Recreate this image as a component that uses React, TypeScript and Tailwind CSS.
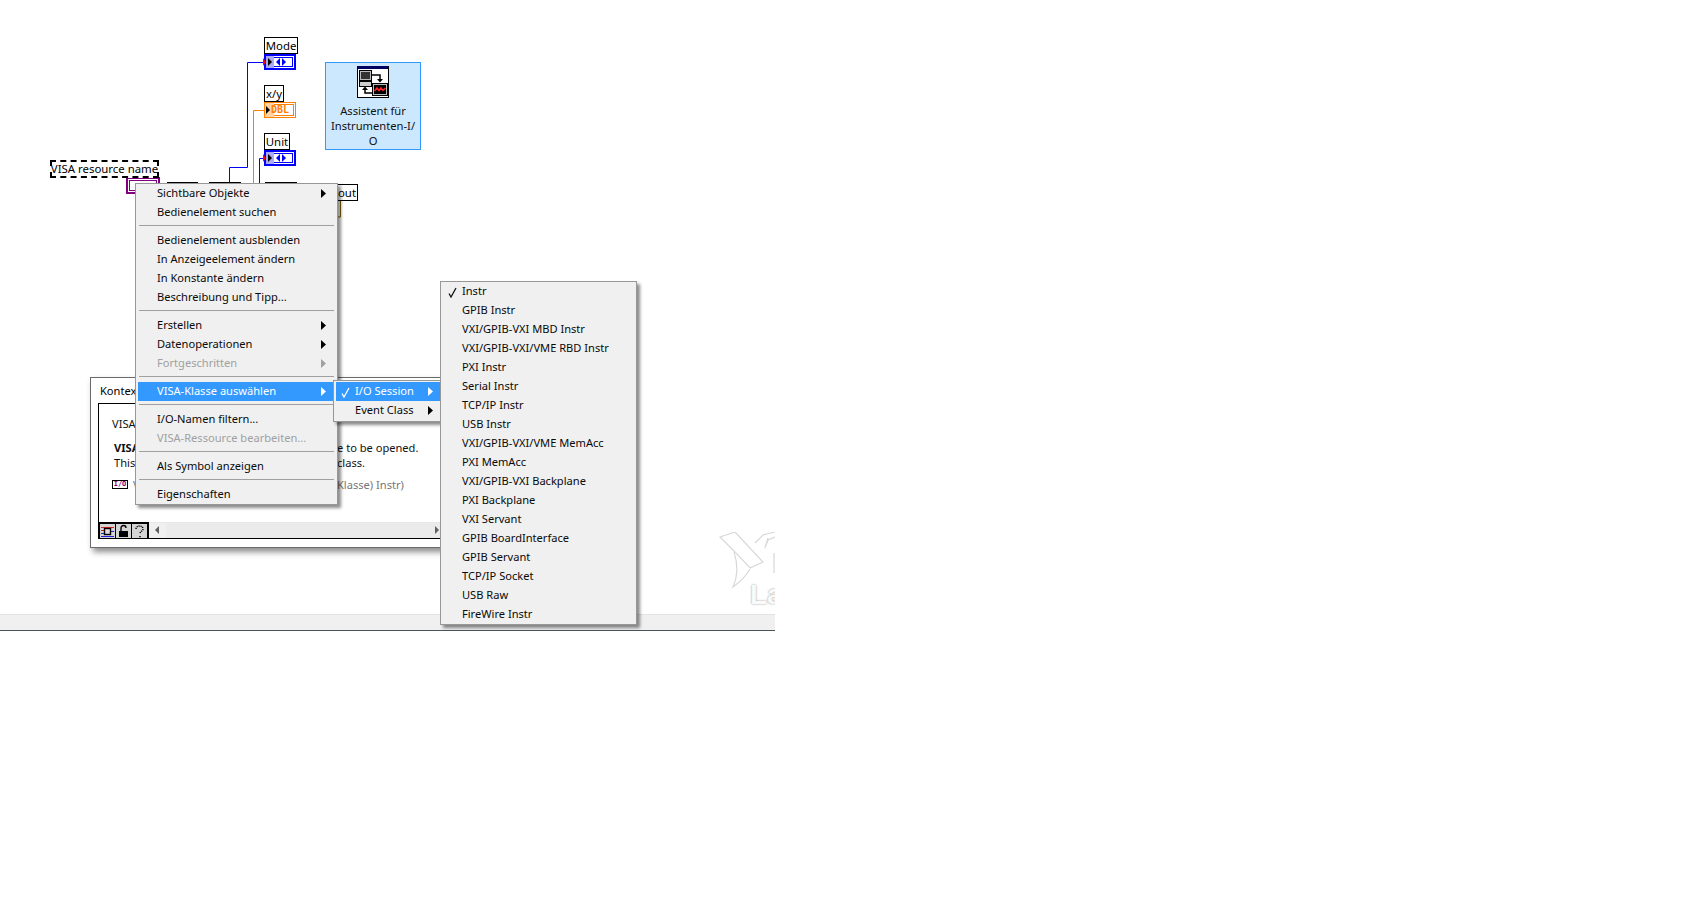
const FONT = '[font-family:"Noto_Sans",sans-serif]';

type MenuRow = {
  label?: string;
  sub?: boolean;
  disabled?: boolean;
  active?: boolean;
  checked?: boolean;
  sep?: boolean;
};

const contextMenu: MenuRow[] = [
  { label: 'Sichtbare Objekte', sub: true },
  { label: 'Bedienelement suchen' },
  { sep: true },
  { label: 'Bedienelement ausblenden' },
  { label: 'In Anzeigeelement ändern' },
  { label: 'In Konstante ändern' },
  { label: 'Beschreibung und Tipp...' },
  { sep: true },
  { label: 'Erstellen', sub: true },
  { label: 'Datenoperationen', sub: true },
  { label: 'Fortgeschritten', sub: true, disabled: true },
  { sep: true },
  { label: 'VISA-Klasse auswählen', sub: true, active: true },
  { sep: true },
  { label: 'I/O-Namen filtern...' },
  { label: 'VISA-Ressource bearbeiten...', disabled: true },
  { sep: true },
  { label: 'Als Symbol anzeigen' },
  { sep: true },
  { label: 'Eigenschaften' },
];

const classMenu: MenuRow[] = [
  { label: 'I/O Session', sub: true, active: true, checked: true },
  { label: 'Event Class', sub: true },
];

const instrMenu: MenuRow[] = [
  { label: 'Instr', checked: true },
  { label: 'GPIB Instr' },
  { label: 'VXI/GPIB-VXI MBD Instr' },
  { label: 'VXI/GPIB-VXI/VME RBD Instr' },
  { label: 'PXI Instr' },
  { label: 'Serial Instr' },
  { label: 'TCP/IP Instr' },
  { label: 'USB Instr' },
  { label: 'VXI/GPIB-VXI/VME MemAcc' },
  { label: 'PXI MemAcc' },
  { label: 'VXI/GPIB-VXI Backplane' },
  { label: 'PXI Backplane' },
  { label: 'VXI Servant' },
  { label: 'GPIB BoardInterface' },
  { label: 'GPIB Servant' },
  { label: 'TCP/IP Socket' },
  { label: 'USB Raw' },
  { label: 'FireWire Instr' },
];

function Check({ light }: { light?: boolean }) {
  return (
    <svg width="9" height="11" viewBox="0 0 9 11" className="absolute left-[5px] top-[5px]">
      <path d="M1 6.5 L3 10 L8 1" fill="none" stroke={light ? '#fff' : '#111'} strokeWidth="1.3" />
    </svg>
  );
}

function Arrow({ color, className }: { color: string; className: string }) {
  return (
    <svg width="5" height="9" viewBox="0 0 5 9" className={`absolute top-[5px] ${className}`}>
      <path d="M0 0 L5 4.5 L0 9 Z" fill={color} />
    </svg>
  );
}

function Menu({ rows, arrowRight }: { rows: MenuRow[]; arrowRight?: string }) {
  return (
    <div className="flex flex-col">
      {rows.map((row, index) =>
        row.sep ? (
          <div key={index} className="mx-[1px] h-[9px] pt-[3px]">
            <div className="h-px bg-[#a0a0a0]" />
          </div>
        ) : (
          <div
            key={index}
            className={`relative h-[19px] whitespace-nowrap pl-[19px] text-[11.1px] leading-[18px] ${
              row.active ? 'bg-[#3399ff] text-white' : row.disabled ? 'text-[#a0a0a0]' : 'text-[#0a0a0a]'
            }`}
          >
            {row.checked && <Check light={row.active} />}
            {row.label}
            {row.sub && (
              <Arrow
                color={row.active ? '#fff' : row.disabled ? '#a0a0a0' : '#000'}
                className={arrowRight ?? 'right-[7px]'}
              />
            )}
          </div>
        )
      )}
    </div>
  );
}

function Label({ text, className, dashed }: { text: string; className: string; dashed?: boolean }) {
  return (
    <div
      className={`absolute z-10 flex items-center justify-center whitespace-nowrap bg-white text-[11.4px] text-black ${
        dashed ? 'border-2 border-dashed border-black' : 'border border-black'
      } ${className}`}
    >
      {text}
    </div>
  );
}

function EnumTerminal({ className }: { className: string }) {
  return (
    <div className={`absolute z-10 flex h-[16px] w-[32px] border-2 border-[#0000ff] bg-white ${className}`}>
      <div className="relative h-full w-[8px] bg-[#a9a9f5]">
        <span className="absolute left-[-3px] top-[2px] h-0 w-0 border-y-[4px] border-l-[3px] border-y-transparent border-l-[#ff0000]" />
        <span className="absolute left-[2px] top-[2px] h-0 w-0 border-y-[4px] border-l-[4px] border-y-transparent border-l-black" />
      </div>
      <div className="my-px mr-px flex flex-1 items-center gap-[2px] border-y border-r border-[#0000ff] pl-[2px]">
        <span className="h-0 w-0 border-y-[4px] border-r-[4px] border-y-transparent border-r-[#0000ff]" />
        <span className="h-0 w-0 border-y-[4px] border-l-[4px] border-y-transparent border-l-[#0000ff]" />
      </div>
    </div>
  );
}

function DblTerminal({ className }: { className: string }) {
  return (
    <div className={`absolute z-10 flex h-[16px] w-[32px] border border-[#ff8000] bg-white ${className}`}>
      <div className="relative h-full w-[9px] shrink-0 bg-[#ffd2a0]">
        <span className="absolute left-[1px] top-[3px] h-0 w-0 border-y-[4px] border-l-[4px] border-y-transparent border-l-black" />
      </div>
      <div className="my-px mr-px flex flex-1 items-center border-y border-r border-[#ff8000]">
        <span className="relative z-10 -ml-[3px] font-['DejaVu_Sans_Mono',monospace] text-[10px] font-bold leading-none text-[#ff8000]">
          DBL
        </span>
      </div>
    </div>
  );
}

function VisaIcon() {
  return (
    <svg width="32" height="32" viewBox="0 0 32 32" className="block">
      <rect x="0.5" y="0.5" width="31" height="31" fill="#fff" stroke="#000" />
      <rect x="1" y="0" width="30" height="3" fill="#000060" />
      <rect x="2.5" y="4.5" width="12" height="10" fill="#bbb" stroke="#000" />
      <rect x="4" y="6" width="9" height="7" fill="#333" />
      <rect x="2.5" y="15.5" width="12" height="5" fill="#ccc" stroke="#000" />
      <path d="M15 9 H23 V15" fill="none" stroke="#000" strokeWidth="1.5" />
      <path d="M20 13 H26 L23 16.5 Z" fill="#000" />
      <rect x="15.5" y="17.5" width="15" height="12" fill="#bbb" stroke="#000" />
      <rect x="17" y="19" width="12" height="9" fill="#000" />
      <path d="M17.5 25 L20 22 L22 24.5 L24 22 L26 24.5 L28.5 22" fill="none" stroke="#ff2020" strokeWidth="1.5" />
      <path d="M15 27 H8 V22" fill="none" stroke="#000" strokeWidth="1.5" />
      <path d="M5 24 H11 L8 20.5 Z" fill="#000" />
    </svg>
  );
}

function HelpButton({ children }: { children: React.ReactNode }) {
  return (
    <div className="flex w-[16px] items-center justify-center border-l border-black bg-[#d4d4d4]">
      <svg width="15" height="15" viewBox="0 0 15 15">
        {children}
      </svg>
    </div>
  );
}

function HelpWindow() {
  return (
    <div className="absolute left-[90px] top-[377px] flex h-[171px] w-[360px] flex-col border border-[#6a6a6a] bg-white px-[7px] pb-[8px] shadow-[3px_4px_6px_rgba(0,0,0,0.45)]">
      <div className="h-[25px] pl-[2px] text-[11.1px] leading-[26px] text-black">Kontex</div>
      <div className="flex flex-1 flex-col border border-black">
        <div className="flex-1 pl-[13px] pt-[12px] text-[11.1px] leading-[15px] text-[#111]">
          <div>VISA</div>
          <div className="mt-[9px] flex pl-[2px]">
            <span className="w-[223px] font-bold">VISA</span>
            <span>e to be opened.</span>
          </div>
          <div className="flex pl-[2px]">
            <span className="w-[223px]">This</span>
            <span>class.</span>
          </div>
          <div className="mt-[7px] flex items-center text-[#777]">
            <span className="flex h-[9px] w-[16px] items-center justify-center border border-black font-['DejaVu_Sans_Mono',monospace] text-[7px] font-bold leading-none text-[#800080]">
              I/O
            </span>
            <span className="w-[209px] pl-[5px]">V</span>
            <span>Klasse) Instr)</span>
          </div>
        </div>
        <div className="flex h-[16px]">
          <div className="flex border-r-2 border-t-2 border-black">
            <HelpButton>
              <path d="M1 3.5 H14 M1 6.5 H4" stroke="#e02020" />
              <rect x="4.5" y="4.5" width="6" height="6" fill="#ddd" stroke="#000" strokeWidth="1.4" />
              <path d="M1 9.5 H4 M1 12.5 H14 M11 7.5 H14" stroke="#2020e0" />
            </HelpButton>
            <HelpButton>
              <rect x="3" y="7" width="9" height="6" fill="#000" />
              <path d="M5 7 V4 A2.5 2.5 0 0 1 10 4" fill="none" stroke="#000" strokeWidth="1.4" />
            </HelpButton>
            <HelpButton>
              <path d="M4 5 C4 1 11 1 11 5 C11 7 8 7 8 10 M8 12 V14" fill="none" stroke="#000" strokeDasharray="1.2 0.8" strokeWidth="1.4" />
            </HelpButton>
          </div>
          <div className="relative flex-1 border-t border-[#e8e8e8] bg-[#f0f0f0]">
            <div className="ml-[17px] h-full bg-[#ebebeb]" />
            <span className="absolute left-[6px] top-[3px] h-0 w-0 border-y-[4px] border-r-[4px] border-y-transparent border-r-[#606060]" />
            <span className="absolute left-[286px] top-[3px] h-0 w-0 border-y-[4px] border-l-[4px] border-y-transparent border-l-[#606060]" />
          </div>
        </div>
      </div>
    </div>
  );
}

function Wires() {
  return (
    <svg width="775" height="240" className="absolute left-0 top-0">
      <path d="M229.5 184 V167.5 H247.5 V62.5 H264" fill="none" stroke="#0000ff" />
      <path d="M253.5 184 V110.5 H264" fill="none" stroke="#ff8000" />
      <path d="M259.5 184 V158.5 H264" fill="none" stroke="#0000ff" />
      <path d="M167 183 H198 M209 183 H241 M265 183 H297" stroke="#000" strokeWidth="2" />
      <path d="M340.5 200 V217 H335" fill="none" stroke="#806000" />
    </svg>
  );
}

function Logo() {
  return (
    <div className="absolute left-[718px] top-[532px] h-[80px] w-[57px] overflow-hidden">
      <svg width="57" height="60" viewBox="0 0 57 60" className="absolute left-0 top-0">
        <path d="M2 5 L17 0 L45 30 L32 36 L17 20 Z" fill="#fff" stroke="#d8d8d8" strokeWidth="1.2" />
        <path d="M16 20 C20 32 20 44 15 55 C22 50 28 44 32 37" fill="#fff" stroke="#d8d8d8" strokeWidth="1.2" />
        <path d="M37 11 L45 3 L57 0 M50 6 L47 16 L50 8 L57 5 M56 21 V41" fill="none" stroke="#d8d8d8" strokeWidth="1.2" />
      </svg>
      <div className="absolute left-[32px] top-[49px] font-['Liberation_Sans',sans-serif] text-[28px] font-bold leading-none text-[#fafafa] [text-shadow:0_0_2px_#8a8a8a]">
        La
      </div>
    </div>
  );
}

export default function App() {
  return (
    <div className={`h-[918px] w-[1702px] bg-white ${FONT}`}>
      <div className="relative flex h-[631px] w-[775px] flex-col justify-end overflow-hidden">
        <Wires />
        <Label text="Mode" className="left-[264px] top-[37px] h-[17px] w-[34px]" />
        <EnumTerminal className="left-[264px] top-[54px]" />
        <Label text="x/y" className="left-[264px] top-[85px] h-[17px] w-[20px]" />
        <DblTerminal className="left-[264px] top-[102px]" />
        <Label text="Unit" className="left-[264px] top-[133px] h-[17px] w-[26px]" />
        <EnumTerminal className="left-[264px] top-[150px]" />

        <div className="absolute left-[325px] top-[62px] flex h-[88px] w-[96px] flex-col items-center border border-[#3399ff] bg-[#cce8ff] pt-[3px]">
          <VisaIcon />
          <div className="mt-[5px] text-center text-[11.2px] leading-[15px] text-[#111]">
            Assistent für
            <br />
            Instrumenten-I/
            <br />O
          </div>
        </div>

        <Label text="VISA resource name" dashed className="left-[50px] top-[160px] h-[18px] w-[109px]" />
        <div className="absolute left-[126px] top-[177px] h-[17px] w-[34px] border-2 border-[#800080] bg-white p-px">
          <div className="h-full border border-[#800080]" />
        </div>
        <Label text="out" className="left-[336px] top-[184px] h-[17px] w-[22px] justify-end pr-px" />

        <Logo />
        <HelpWindow />

        <div className="h-[17px] border-b border-t border-b-[#4a5358] border-t-[#e4e4e4] bg-[#f0f0f0]" />

        <div className="absolute left-[135px] top-[183px] z-20 w-[203px] border border-[#979797] bg-[#f0f0f0] px-[2px] shadow-[3px_3px_3px_rgba(0,0,0,0.45)]">
          <Menu rows={contextMenu} arrowRight="right-[9px]" />
        </div>
        <div className="absolute left-[333px] top-[380px] z-30 w-[110px] border border-[#979797] bg-[#f0f0f0] px-[2px] py-px shadow-[3px_3px_3px_rgba(0,0,0,0.45)]">
          <Menu rows={classMenu} />
        </div>
        <div className="absolute left-[440px] top-[281px] z-40 w-[197px] border border-[#979797] bg-[#f0f0f0] px-[2px] shadow-[3px_3px_3px_rgba(0,0,0,0.45)]">
          <Menu rows={instrMenu} />
        </div>
      </div>
    </div>
  );
}
